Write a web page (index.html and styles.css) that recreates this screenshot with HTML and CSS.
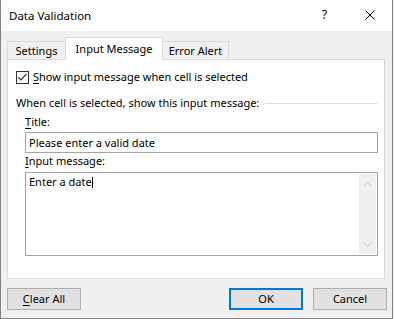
FILE: index.html
```html
<!DOCTYPE html>
<html>
<head>
<meta charset="utf-8">
<link rel="stylesheet" href="styles.css">
</head>
<body>
<div class="window">
  <div class="titlebar">
    <span class="title">Data Validation</span>
    <span class="help">?</span>
    <svg class="close" width="10" height="10" viewBox="0 0 10 10"><path d="M0.5 0.5 L9.5 9.5 M9.5 0.5 L0.5 9.5" stroke="#000" stroke-width="1" fill="none"/></svg>
  </div>
  <div class="body">
    <div class="tabs">
      <div class="tab t-settings">Settings</div>
      <div class="tab active">Input Message</div>
      <div class="tab t-error">Error Alert</div>
    </div>
    <div class="panel">
      <div class="check-row">
        <span class="checkbox"><svg width="11" height="11" viewBox="0 0 11 11"><path d="M1.5 5.5 L4 8 L9.5 2" stroke="#333" stroke-width="1.2" fill="none"/></svg></span>
        <span class="label"><u>S</u>how input message when cell is selected</span>
      </div>
      <div class="group">
        <span class="label">When cell is selected, show this input message:</span>
        <span class="rule"></span>
      </div>
      <div class="fields">
        <div class="label"><u>T</u>itle:</div>
        <div class="input">Please enter a valid date</div>
        <div class="label"><u>I</u>nput message:</div>
        <div class="textarea">
          <div class="ta-text">Enter a date<span class="caret"></span></div>
          <div class="scrollbar">
            <svg width="9" height="5" viewBox="0 0 9 5"><path d="M0.5 4.5 L4.5 0.5 L8.5 4.5" stroke="#c6c6c6" fill="none"/></svg>
            <svg width="9" height="5" viewBox="0 0 9 5"><path d="M0.5 0.5 L4.5 4.5 L8.5 0.5" stroke="#c6c6c6" fill="none"/></svg>
          </div>
        </div>
      </div>
    </div>
    <div class="buttons">
      <div class="btn"><u>C</u>lear All</div>
      <div class="spacer"></div>
      <div class="btn default">OK</div>
      <div class="btn">Cancel</div>
    </div>
  </div>
</div>
</body>
</html>
```
FILE: styles.css
```css
html, body {
  margin: 0;
  padding: 0;
  background: #f0f0f0;
}
body {
  font-family: "Noto Sans", "Open Sans", sans-serif;
  font-size: 11px;
  line-height: 16px;
  color: #000;
}
u { text-decoration: underline; text-underline-offset: 2px; }
.window {
  width: 391px;
  height: 318px;
  border-left: 1px solid #838383;
  border-right: 1px solid #838383;
  border-bottom: 1px solid #838383;
  display: flex;
  flex-direction: column;
  background: #f0f0f0;
}
.titlebar {
  height: 31px;
  background: #fff;
  display: flex;
  align-items: flex-start;
  flex-shrink: 0;
}
.title {
  margin-top: 8px;
  margin-left: 8px;
  flex: 1;
  font-size: 11.5px;
}
.help {
  margin-top: 7px;
  width: 43px;
  font-size: 12px;
}
.close {
  margin-top: 10px;
  margin-right: 17px;
}
.body {
  flex: 1;
  padding: 6px 6px 0 6px;
  display: flex;
  flex-direction: column;
}
.tabs {
  display: flex;
  align-items: flex-end;
  height: 23px;
  margin-bottom: -1px;
  position: relative;
  z-index: 1;
}
.tab {
  height: 16px;
  padding-top: 1px;
  margin-bottom: 1px;
  border: 1px solid #d9d9d9;
  border-bottom: none;
  background: #f0f0f0;
  text-align: center;
  box-sizing: content-box;
}
.t-settings { width: 57px; margin-right: -1px; }
.t-error { width: 65px; margin-left: -1px; }
.tab.active {
  width: 96px;
  height: 19px;
  background: #fff;
  padding-top: 3px;
  margin-bottom: 0;
  position: relative;
}
.panel {
  width: 368px;
  height: 210px;
  background: #fff;
  border: 1px solid #d9d9d9;
  padding: 8px 0 0 8px;
}
.check-row {
  display: flex;
  align-items: center;
  height: 16px;
  margin-top: 1px;
}
.checkbox {
  width: 11px;
  height: 11px;
  border: 1px solid #333;
  margin-right: 4px;
  display: flex;
  background: #fff;
}
.group {
  display: flex;
  align-items: center;
  margin-top: 10px;
  height: 16px;
}
.rule {
  flex: 1;
  height: 1px;
  background: #dcdcdc;
  margin: 0 7px 0 6px;
}
.fields {
  padding-left: 9px;
  width: 353px;
}
.fields > .label:first-child { margin-top: 3px; }
.input {
  margin-top: 2px;
  height: 19px;
  border: 1px solid #a5a5a5;
  padding-left: 3px;
  line-height: 19px;
}
.textarea {
  margin-top: 3px;
  height: 82px;
  border: 1px solid #a5a5a5;
  display: flex;
}
.ta-text {
  flex: 1;
  padding: 1px 0 0 3px;
  line-height: 16px;
}
.caret {
  display: inline-block;
  width: 1px;
  height: 11px;
  background: #000;
  vertical-align: -2px;
}
.scrollbar {
  width: 17px;
  margin: 1px 1px 1px 0;
  background: #f0f0f0;
  display: flex;
  flex-direction: column;
  justify-content: space-between;
  align-items: center;
  padding: 8px 0 7px;
}
.scrollbar svg { display: block; }
.buttons {
  display: flex;
  margin-top: 9px;
  margin-right: -1px;
}
.spacer { flex: 1; }
.btn {
  width: 72px;
  height: 20px;
  border: 1px solid #adadad;
  background: #e1e1e1;
  text-align: center;
  line-height: 20px;
}
.btn.default {
  width: 70px;
  height: 18px;
  border: 2px solid #0078d7;
  line-height: 18px;
  margin-right: 10px;
}
```
